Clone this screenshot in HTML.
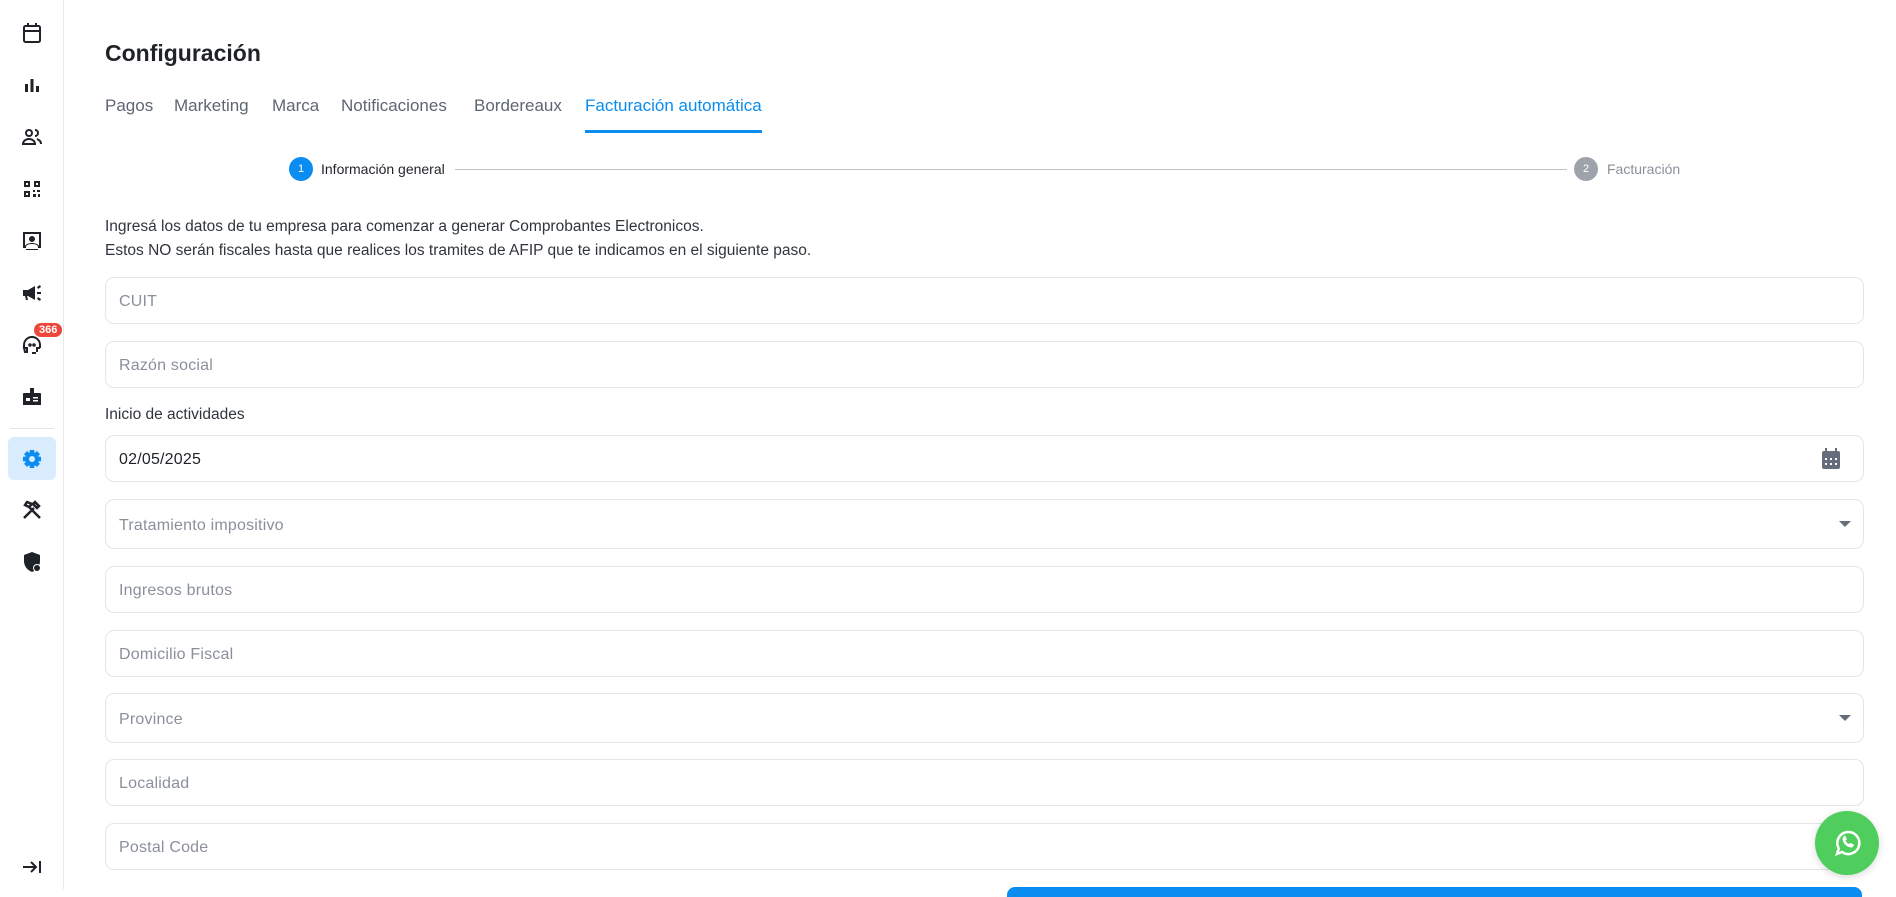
<!DOCTYPE html>
<html><head><meta charset="utf-8"><style>
*{box-sizing:border-box;margin:0;padding:0}
body{width:1896px;height:889px;overflow:hidden;background:#fff;font-family:"Liberation Sans",sans-serif;position:relative;color:#1f2328}
.sb{position:absolute;left:0;top:0;width:64px;height:889px;border-right:1px solid #e6e8ec;background:#fff}
.ic{position:absolute;left:20px;width:24px;height:24px}
.title{position:absolute;left:105px;top:40px;font-size:23px;font-weight:bold;color:#1f2328}
.tab{position:absolute;top:96px;font-size:17px;color:#5e6573}
.tab.a{color:#0a8cf0}
.ul{position:absolute;left:585px;top:130px;width:177px;height:3px;background:#0a8cf0}
.f{position:absolute;left:105px;width:1759px;height:47px;border:1px solid #e3e5ea;border-radius:9px;font-size:16px;color:#8a909b;padding-left:13px;padding-top:3px;display:flex;align-items:center;letter-spacing:.2px}
.car{position:absolute;right:12px;top:50%;margin-top:-3px;border-left:6px solid transparent;border-right:6px solid transparent;border-top:6px solid #666d7a}
.p{position:absolute;left:105px;font-size:15.5px;color:#30353d}
</style></head><body>
<div class="sb">
<svg class="ic" style="top:21px" viewBox="0 0 24 24" fill="none" stroke="#1f2328" stroke-width="2"><rect x="4" y="5" width="16" height="16" rx="1.5"/><path d="M4 10h16M8 2v4M16 2v4"/></svg>
<svg class="ic" style="top:73px" viewBox="0 0 24 24" fill="#1f2328"><rect x="5" y="11" width="3" height="8"/><rect x="10.5" y="6" width="3" height="13"/><rect x="16" y="13" width="3" height="6"/></svg>
<svg class="ic" style="top:125px" viewBox="0 0 24 24" fill="none" stroke="#1f2328" stroke-width="2"><circle cx="9" cy="8" r="3"/><path d="M3 19c0-3 3-5 6-5s6 2 6 5zM15 5a3 3 0 010 6M17 14c2 1 4 2 4 5"/></svg>
<svg class="ic" style="top:177px" viewBox="0 0 24 24" fill="#1f2328"><path d="M4 4h6v6H4zM6 6v2h2V6zM14 4h6v6h-6zM16 6v2h2V6zM4 14h6v6H4zM6 16v2h2v-2zM13 13h2v2h-2zM17 13h3v2h-3zM13 17h3v3h-3zM18 17h2v3h-2z"/></svg>
<svg class="ic" style="top:229px" viewBox="0 0 24 24" fill="#1f2328"><path d="M3 3h18v16h-3v-1c0-2-3-3-6-3s-6 1-6 3v1H3zM5 5v12h0c1-2 4-3 7-3s6 1 7 3V5zM12 7a3 3 0 110 6 3 3 0 010-6zM6 20h12v1H6z"/></svg>
<svg class="ic" style="top:281px" viewBox="0 0 24 24" fill="#1f2328"><path d="M3 9h5l7-4v14l-7-4H7l1 4H6l-1-4H3zM17 11h4v2h-4zM17 6l3-2 1 2-3 2zM17 18l3 2 1-2-3-2z"/></svg>
<svg class="ic" style="top:333px" viewBox="0 0 24 24" fill="none" stroke="#1f2328" stroke-width="2"><path d="M4 15v-3a8 8 0 0116 0v3M4 15h3v4H5zM20 15h-3v4M12 20h4"/><circle cx="10" cy="12" r=".8" fill="#1f2328"/><circle cx="14" cy="12" r=".8" fill="#1f2328"/></svg>
<div style="position:absolute;left:34px;top:323px;background:#f0453a;color:#fff;font-size:11px;font-weight:bold;border-radius:9px;padding:1px 5px">366</div>
<svg class="ic" style="top:385px" viewBox="0 0 24 24" fill="#1f2328"><path d="M10 3h4v5h6a1 1 0 011 1v11H3V9a1 1 0 011-1h6z"/><rect x="6" y="13" width="4" height="3" fill="#fff"/><rect x="13" y="12" width="5" height="1.5" fill="#fff"/><rect x="13" y="15" width="5" height="1.5" fill="#fff"/></svg>
<div style="position:absolute;left:10px;top:428px;width:44px;height:1px;background:#e3e5ea"></div>
<div style="position:absolute;left:8px;top:437px;width:48px;height:43px;border-radius:6px;background:#d8ecfd"></div>
<svg class="ic" style="top:447px" viewBox="0 0 24 24"><g fill="#0a8cf0"><circle cx="12" cy="12" r="7"/><g stroke="#0a8cf0" stroke-width="4.5"><path d="M12 3v18M3 12h18M5.6 5.6l12.8 12.8M18.4 5.6L5.6 18.4"/></g></g><circle cx="12" cy="12" r="3" fill="#d8ecfd"/></svg>
<svg class="ic" style="top:498px" viewBox="0 0 24 24" fill="none" stroke="#1f2328" stroke-width="2.5"><path d="M4 20L14 10M20 20L9 9M7 4l5 2-3 3-4-2zM15 4l4 4-2 2-4-4z"/></svg>
<svg class="ic" style="top:550px" viewBox="0 0 24 24" fill="#1f2328"><path d="M12 2l8 3v6c0 5-3 9-8 11-5-2-8-6-8-11V5z"/><circle cx="17" cy="18" r="4" fill="#fff"/><circle cx="17" cy="18" r="3"/></svg>
<svg class="ic" style="top:855px" viewBox="0 0 24 24" fill="none" stroke="#1f2328" stroke-width="2"><path d="M3 12h13M11 7l5 5-5 5M20 6v12"/></svg>
</div>
<div class="title">Configuración</div>
<div class="tab" style="left:105px">Pagos</div>
<div class="tab" style="left:174px">Marketing</div>
<div class="tab" style="left:272px">Marca</div>
<div class="tab" style="left:341px">Notificaciones</div>
<div class="tab" style="left:474px">Bordereaux</div>
<div class="tab a" style="left:585px">Facturación automática</div>
<div class="ul"></div>
<div style="position:absolute;left:289px;top:157px;width:24px;height:24px;border-radius:50%;background:#0a8cf0;color:#fff;font-size:11px;text-align:center;line-height:24px">1</div>
<div style="position:absolute;left:321px;top:161px;font-size:14px;color:#1f2328">Información general</div>
<div style="position:absolute;left:455px;top:169px;width:1112px;height:1px;background:#bdc1c8"></div>
<div style="position:absolute;left:1574px;top:157px;width:24px;height:24px;border-radius:50%;background:#9ea3ab;color:#fff;font-size:11px;text-align:center;line-height:24px">2</div>
<div style="position:absolute;left:1607px;top:161px;font-size:14px;color:#8a909b">Facturación</div>
<div class="p" style="top:218px">Ingresá los datos de tu empresa para comenzar a generar Comprobantes Electronicos.</div>
<div class="p" style="top:242px">Estos NO serán fiscales hasta que realices los tramites de AFIP que te indicamos en el siguiente paso.</div>
<div class="f" style="top:277px">CUIT</div>
<div class="f" style="top:341px">Razón social</div>
<div class="p" style="top:406px">Inicio de actividades</div>
<div class="f" style="top:435px;color:#1f2328">02/05/2025
<svg style="position:absolute;right:22px;top:12px" width="20" height="22" viewBox="0 0 20 22" fill="#666d7a"><rect x="1" y="3" width="18" height="18" rx="2"/><rect x="4" y="0" width="2" height="4"/><rect x="14" y="0" width="2" height="4"/><g fill="#fff"><rect x="4" y="10" width="2" height="2"/><rect x="9" y="10" width="2" height="2"/><rect x="14" y="10" width="2" height="2"/><rect x="4" y="15" width="2" height="2"/><rect x="9" y="15" width="2" height="2"/><rect x="14" y="15" width="2" height="2"/></g></svg></div>
<div class="f" style="top:499px;height:50px">Tratamiento impositivo<div class="car"></div></div>
<div class="f" style="top:566px">Ingresos brutos</div>
<div class="f" style="top:630px">Domicilio Fiscal</div>
<div class="f" style="top:693px;height:50px">Province<div class="car"></div></div>
<div class="f" style="top:759px">Localidad</div>
<div class="f" style="top:823px">Postal Code</div>
<div style="position:absolute;left:1007px;top:887px;width:855px;height:10px;border-radius:8px 8px 0 0;background:#0a8cf0"></div>
<div style="position:absolute;left:1815px;top:811px;width:64px;height:64px;border-radius:50%;background:#4fce5d;box-shadow:0 2px 8px rgba(0,0,0,.15)">
<svg style="position:absolute;left:17px;top:17px" width="30" height="30" viewBox="0 0 30 30" fill="none" stroke="#fff" stroke-width="2.5"><path d="M5 26l1.8-5.5A11 11 0 1110 24z"/><path d="M11 10c0 5 4 9 9 9l1.5-2-3-1.5-1.5 1.2c-2-1-3.3-2.3-4-4l1.2-1.5L12.8 8z" fill="#fff" stroke-width="1"/></svg></div>
</body></html>
